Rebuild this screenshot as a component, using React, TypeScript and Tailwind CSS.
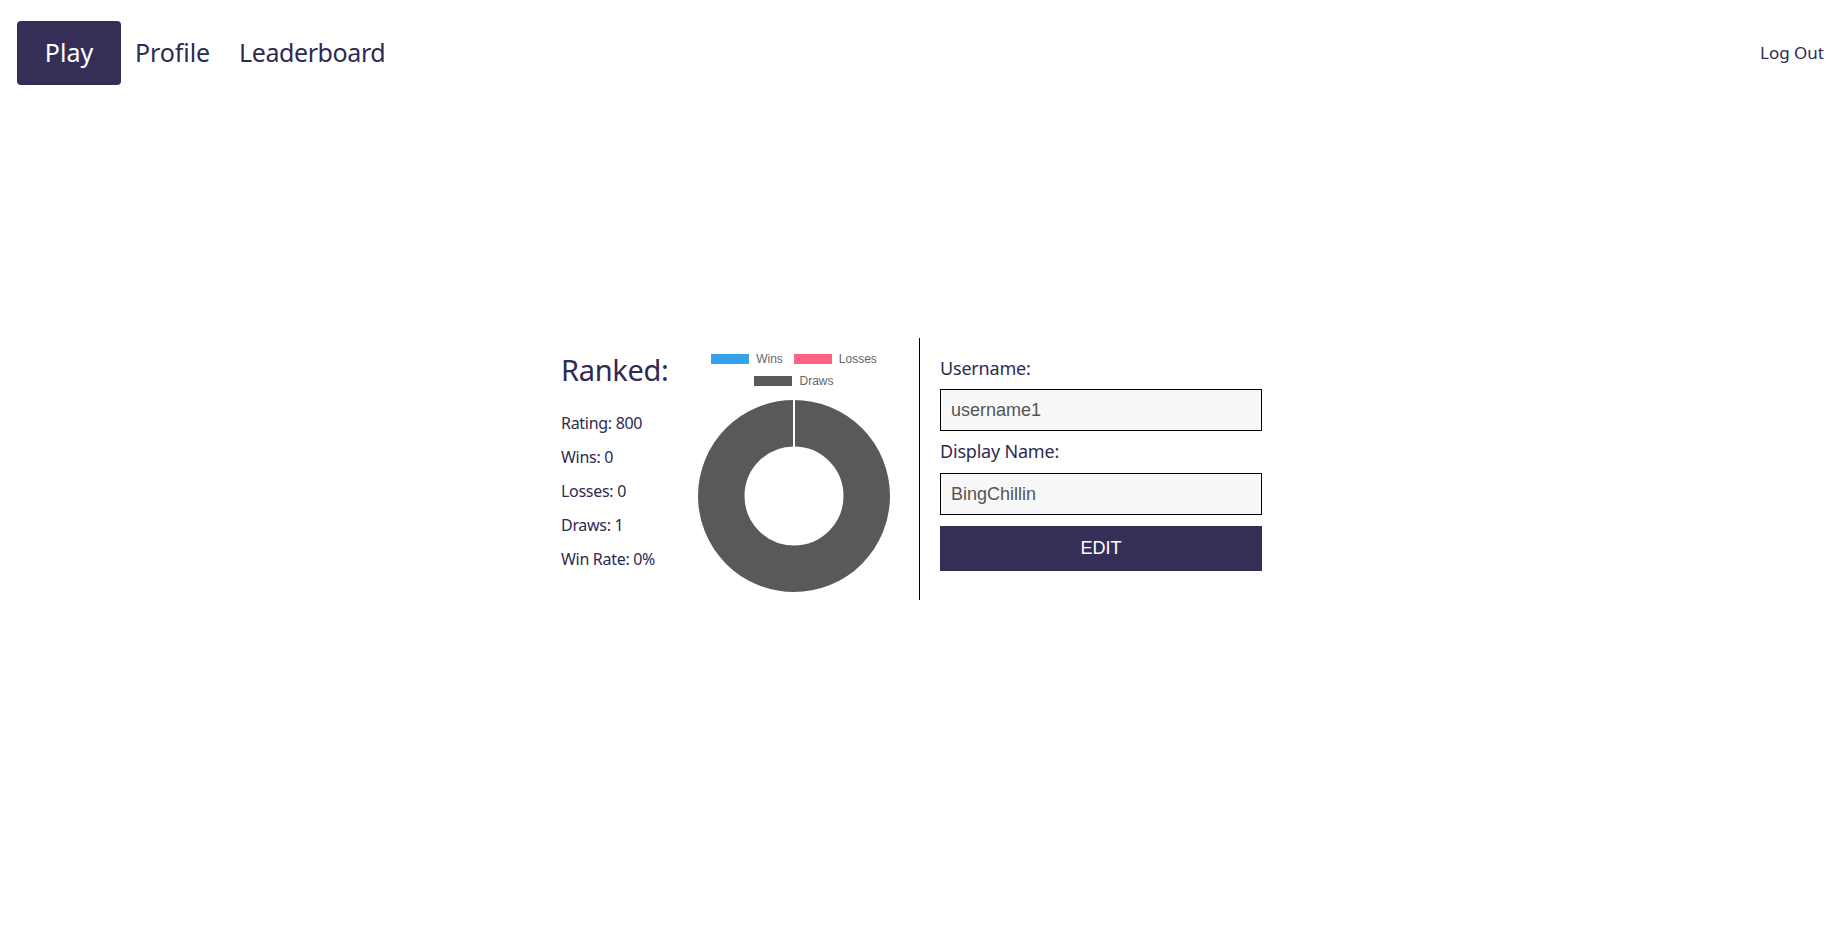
import React from 'react'

const stats = [
  { label: 'Rating', value: '800' },
  { label: 'Wins', value: '0' },
  { label: 'Losses', value: '0' },
  { label: 'Draws', value: '1' },
  { label: 'Win Rate', value: '0%' },
]

function LegendItem({ color, label }: { color: string; label: string }) {
  return (
    <div className="flex items-center gap-[7px]">
      <span className={`block w-[38px] h-[10px] ${color}`} />
      <span className="text-[12px] text-[#666666]">{label}</span>
    </div>
  )
}

function DonutChart() {
  return (
    <div className="w-[208px] pt-[12px] flex flex-col items-center" style={{ fontFamily: '"Liberation Sans", Arial, sans-serif' }}>
      {/* legend */}
      <div className="h-[18px] flex items-center justify-center gap-[11px]">
        <LegendItem color="bg-[#36a2eb]" label="Wins" />
        <LegendItem color="bg-[#ff6384]" label="Losses" />
      </div>
      <div className="h-[18px] mt-[4px] flex items-center justify-center">
        <LegendItem color="bg-[#595959]" label="Draws" />
      </div>
      <svg width="192" height="192" viewBox="0 0 192 192" className="mt-[10px]">
        <circle cx="96" cy="96" r="72.75" fill="none" stroke="#595959" strokeWidth="46.5" />
        <line x1="96" y1="0" x2="96" y2="47" stroke="#ffffff" strokeWidth="2" />
      </svg>
    </div>
  )
}

export default function App() {
  return (
    <div className="min-h-screen bg-white text-[#2e2a52]" style={{ fontFamily: '"Noto Sans", "Open Sans", sans-serif' }}>
      {/* nav */}
      <nav className="flex items-center justify-between pt-[21px] pl-[17px] pr-[20px]">
        <div className="flex items-center">
          <button className="w-[104px] h-[64px] rounded-[4px] bg-[#352f57] text-white text-[25px] flex items-center justify-center">
            Play
          </button>
          <a className="pl-[14px] pr-[15px] text-[25px] tracking-[-0.1px] text-[#2e2a52]">Profile</a>
          <a className="px-[14px] text-[25px] tracking-[-0.4px] text-[#2e2a52]">Leaderboard</a>
        </div>
        <a className="text-[17px] text-[#2e2a52]">Log Out</a>
      </nav>

      {/* profile panel */}
      <main className="flex justify-center mt-[253px]">
        <div className="flex">
          <div className="w-[129px] pt-[14px]">
            <h2 className="text-[29px] leading-[36px] mb-[18px] tracking-[-0.3px]">Ranked:</h2>
            {stats.map((s) => (
              <p key={s.label} className="text-[16px] leading-[34px] tracking-[-0.3px]">
                {s.label}: {s.value}
              </p>
            ))}
          </div>
          <DonutChart />
        </div>

        <div className="ml-[21px] h-[262px] border-l border-black pl-[20px] pr-[21px] pt-[18px]">
          <div className="w-[322px] flex flex-col">
            <label className="text-[18px] leading-[24px] mb-[9px] tracking-[-0.2px]">Username:</label>
            <input
              readOnly
              value="username1"
              className="h-[42px] border border-black bg-[#f8f8f8] px-[10px] text-[18px] text-[#555555] outline-none"
              style={{ fontFamily: '"Liberation Sans", Arial, sans-serif' }}
            />
            <label className="text-[18px] leading-[24px] mt-[8px] mb-[10px] tracking-[-0.2px]">Display Name:</label>
            <input
              readOnly
              value="BingChillin"
              className="h-[42px] border border-black bg-[#f8f8f8] px-[10px] text-[18px] text-[#555555] outline-none"
              style={{ fontFamily: '"Liberation Sans", Arial, sans-serif' }}
            />
            <button
              className="mt-[11px] h-[45px] bg-[#352f57] text-white text-[18px]"
              style={{ fontFamily: '"Liberation Sans", Arial, sans-serif' }}
            >
              EDIT
            </button>
          </div>
        </div>
      </main>
    </div>
  )
}
